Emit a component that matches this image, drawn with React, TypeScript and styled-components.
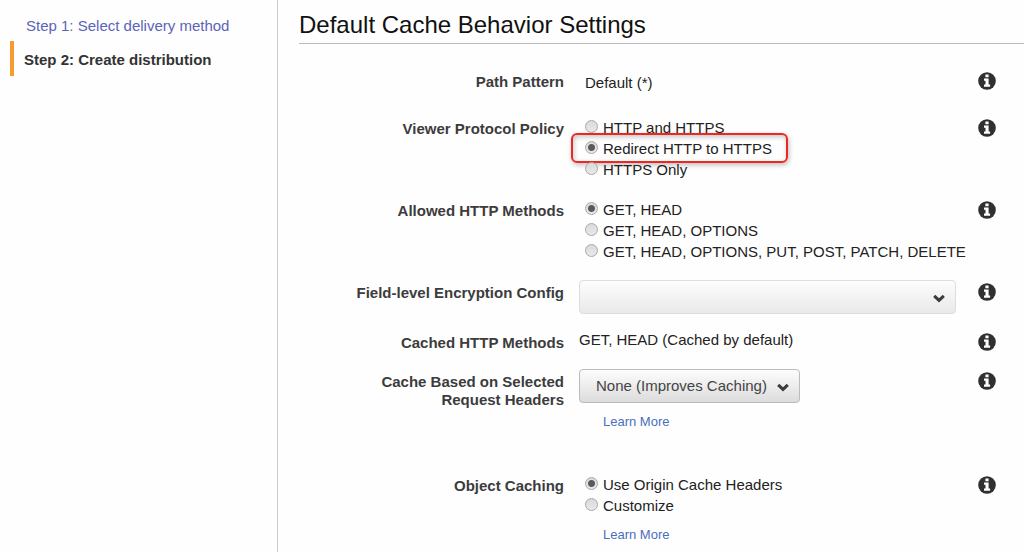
import React from "react";
import styled, { createGlobalStyle, css } from "styled-components";

const GlobalStyle = createGlobalStyle`
  *, *::before, *::after { box-sizing: border-box; }
  body {
    margin: 0;
    background: #fefefe;
    color: #222;
    font-family: "Liberation Sans", Arial, sans-serif;
    font-size: 15px;
    line-height: 20px;
  }
`;

const Page = styled.div`
  display: flex;
  min-height: 100vh;
`;

const Sidebar = styled.nav`
  flex: 0 0 278px;
  border-right: 1px solid #ccc;
  padding: 16px 0 0 10px;
`;

const StepList = styled.ol`
  list-style: none;
  margin: 0;
  padding: 0;
  display: flex;
  flex-direction: column;
  gap: 5px;
`;

const StepLink = styled.a`
  display: block;
  padding-left: 16px;
  color: #5b64b8;
  text-decoration: none;
`;

const CurrentStep = styled.span`
  display: block;
  padding: 3px 0 0 10px;
  border-left: 4px solid #f79a2f;
  line-height: 32px;
  font-weight: bold;
  color: #333;
`;

const Main = styled.main`
  flex: 1;
  min-width: 0;
  padding-left: 21px;
`;

const Title = styled.h1`
  margin: 0;
  padding: 10px 0 3px;
  border-bottom: 1px solid #bbb;
  color: #111;
  font-size: 24px;
  line-height: 30px;
  font-weight: normal;
`;

const Settings = styled.form`
  display: flex;
  flex-direction: column;
  gap: 16px;
  padding: 25px 28px 0 0;
`;

const RowGrid = styled.div<{ $minHeight?: number }>`
  display: grid;
  grid-template-columns: 265px minmax(0, 1fr) 18px;
  align-items: start;
  min-height: ${(p) => p.$minHeight ?? 0}px;
`;

const labelText = css`
  padding: 4px 0 0 45px;
  color: #3c3c3c;
  font-weight: bold;
  line-height: 18px;
  text-align: right;
`;

const RowLabel = styled.label`
  ${labelText}
`;

const RowHeading = styled.span`
  ${labelText}
`;

const Control = styled.div`
  padding: 0 22px 0 15px;
`;

const Value = styled.div<{ $inset?: boolean }>`
  padding: ${(p) => (p.$inset ? "4px 0 0 6px" : 0)};
`;

const InfoButton = styled.button`
  display: block;
  width: 18px;
  height: 18px;
  margin-top: 3px;
  padding: 0;
  border: 0;
  background: none;
  cursor: pointer;
  svg { display: block; }
`;

const Options = styled.div`
  display: flex;
  flex-direction: column;
  align-items: flex-start;
  gap: 1px;
  padding: 2px 0 0 6px;
`;

const Option = styled.label<{ $highlighted?: boolean }>`
  position: relative;
  display: flex;
  align-items: flex-start;
  gap: 5px;
  white-space: nowrap;
  ${(p) =>
    p.$highlighted &&
    css`
      &::after {
        content: "";
        position: absolute;
        inset: -6px -16px -4px -14px;
        border: 2px solid #ee2722;
        border-radius: 6px;
        box-shadow: 1px 2px 5px rgba(0, 0, 0, 0.25), inset 1px 2px 5px rgba(0, 0, 0, 0.22);
        pointer-events: none;
      }
    `}
`;

const Radio = styled.input`
  appearance: none;
  width: 13px;
  height: 13px;
  margin: 2px 0 0;
  border: 1px solid #a9a9a9;
  border-radius: 50%;
  background: linear-gradient(#dadada, #e9e9e9);
  &:checked {
    background: radial-gradient(circle, #5a5a5a 0 3px, transparent 4px), linear-gradient(#dadada, #e9e9e9);
  }
`;

const SelectBox = styled.div<{ $inline?: boolean }>`
  position: relative;
  display: ${(p) => (p.$inline ? "inline-block" : "block")};
  vertical-align: top;
  svg {
    position: absolute;
    right: 11px;
    top: 14px;
    pointer-events: none;
  }
`;

const Select = styled.select<{ $faint?: boolean }>`
  appearance: none;
  display: block;
  width: 100%;
  height: 34px;
  padding: 0 32px 0 16px;
  border: 1px solid ${(p) => (p.$faint ? "#ddd" : "#bbb")};
  border-radius: 4px;
  background: ${(p) => (p.$faint ? "linear-gradient(#fdfdfd, #e9e9e9)" : "linear-gradient(#fdfdfd, #dcdcdc)")};
  color: #444;
  font: inherit;
`;

const MoreLink = styled.a`
  display: block;
  width: fit-content;
  margin: 9px 0 0 24px;
  color: #4a6fbd;
  font-size: 13px;
  text-decoration: none;
`;

function Chevron() {
  return (
    <svg width="12" height="9" viewBox="0 0 12 9" aria-hidden="true">
      <path d="M1.200 1.800 6 6.400 10.800 1.800" fill="none" stroke="#3c3c3c" strokeWidth="3" />
    </svg>
  );
}

function Info({ topic }: { topic: string }) {
  return (
    <InfoButton type="button" aria-label={`About ${topic}`}>
      <svg width="18" height="18" viewBox="0 0 18 18" aria-hidden="true">
        <circle cx="9" cy="9" r="8.800" fill="#303030" />
        <path d="M7.400 2.600h3.200v2.600H7.400zM6 6.600h4.600v6h1.500v2.200H6v-2.200h1.500V8.800H6z" fill="#fff" />
      </svg>
    </InfoButton>
  );
}

type RowProps = {
  label: string;
  controlId?: string;
  minHeight?: number;
  children: React.ReactNode;
};

function Row({ label, controlId, minHeight, children }: RowProps) {
  return (
    <RowGrid $minHeight={minHeight}>
      {controlId ? (
        <RowLabel htmlFor={controlId}>{label}</RowLabel>
      ) : (
        <RowHeading>{label}</RowHeading>
      )}
      <Control>{children}</Control>
      <Info topic={label} />
    </RowGrid>
  );
}

type RadioGroupProps = {
  name: string;
  label: string;
  options: string[];
  selected: string;
  highlighted?: string;
};

function RadioGroup({ name, label, options, selected, highlighted }: RadioGroupProps) {
  return (
    <Options role="radiogroup" aria-label={label}>
      {options.map((option) => (
        <Option key={option} $highlighted={option === highlighted}>
          <Radio type="radio" name={name} defaultChecked={option === selected} />
          {option}
        </Option>
      ))}
    </Options>
  );
}

export default function App() {
  return (
    <>
      <GlobalStyle />
      <Page>
        <Sidebar>
          <StepList>
            <li>
              <StepLink href="#step-1">Step 1: Select delivery method</StepLink>
            </li>
            <li>
              <CurrentStep aria-current="step">Step 2: Create distribution</CurrentStep>
            </li>
          </StepList>
        </Sidebar>
        <Main>
          <Title>Default Cache Behavior Settings</Title>
          <Settings>
            <Row label="Path Pattern" minHeight={31}>
              <Value $inset>Default (*)</Value>
            </Row>
            <Row label="Viewer Protocol Policy" minHeight={66}>
              <RadioGroup
                name="viewer-protocol"
                label="Viewer Protocol Policy"
                options={["HTTP and HTTPS", "Redirect HTTP to HTTPS", "HTTPS Only"]}
                selected="Redirect HTTP to HTTPS"
                highlighted="Redirect HTTP to HTTPS"
              />
            </Row>
            <Row label="Allowed HTTP Methods" minHeight={66}>
              <RadioGroup
                name="allowed-methods"
                label="Allowed HTTP Methods"
                options={[
                  "GET, HEAD",
                  "GET, HEAD, OPTIONS",
                  "GET, HEAD, OPTIONS, PUT, POST, PATCH, DELETE",
                ]}
                selected="GET, HEAD"
              />
            </Row>
            <Row label="Field-level Encryption Config" controlId="encryption">
              <SelectBox>
                <Select id="encryption" $faint defaultValue="">
                  <option value="" />
                </Select>
                <Chevron />
              </SelectBox>
            </Row>
            <Row label="Cached HTTP Methods" minHeight={23}>
              <Value>GET, HEAD (Cached by default)</Value>
            </Row>
            <Row label="Cache Based on Selected Request Headers" controlId="headers" minHeight={88}>
              <SelectBox $inline>
                <Select id="headers" defaultValue="none">
                  <option value="none">None (Improves Caching)</option>
                </Select>
                <Chevron />
              </SelectBox>
              <MoreLink href="#headers-help">Learn More</MoreLink>
            </Row>
            <Row label="Object Caching">
              <RadioGroup
                name="object-caching"
                label="Object Caching"
                options={["Use Origin Cache Headers", "Customize"]}
                selected="Use Origin Cache Headers"
              />
              <MoreLink href="#caching-help">Learn More</MoreLink>
            </Row>
          </Settings>
        </Main>
      </Page>
    </>
  );
}
